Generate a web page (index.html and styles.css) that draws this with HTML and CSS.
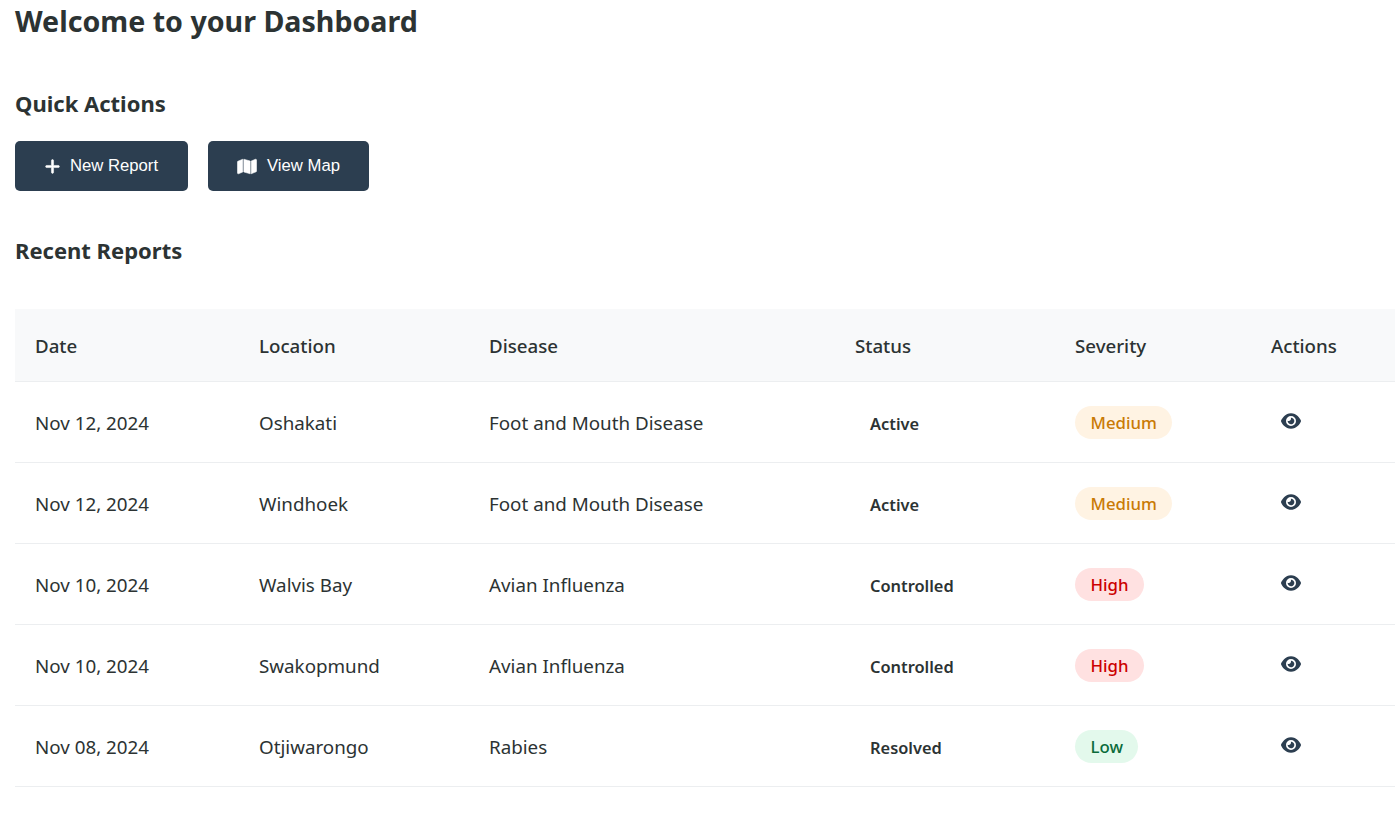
FILE: index.html
```html
<!DOCTYPE html>
<html lang="en">
<head>
<meta charset="utf-8">
<title>Dashboard</title>
<link rel="stylesheet" href="styles.css">
</head>
<body>
<svg class="defs" aria-hidden="true">
  <symbol id="eye" viewBox="0 0 576 512"><path fill="currentColor" d="M288 32c-80.800 0-145.500 36.800-192.600 80.600C48.600 156 17.300 208 2.500 243.700c-3.300 7.900-3.300 16.700 0 24.600C17.300 304 48.600 356 95.400 399.400C142.500 443.200 207.200 480 288 480s145.500-36.800 192.600-80.600c46.800-43.500 78.100-95.400 93-131.100c3.300-7.900 3.300-16.700 0-24.600c-14.900-35.700-46.200-87.700-93-131.100C433.500 68.800 368.800 32 288 32zM144 256a144 144 0 1 1 288 0 144 144 0 1 1-288 0zm144-64c0 35.300-28.700 64-64 64c-7.100 0-13.900-1.200-20.300-3.300c-5.500-1.800-11.900 1.600-11.700 7.400c.3 6.900 1.300 13.800 3.200 20.700c13.700 51.200 66.400 81.600 117.600 67.900s81.600-66.400 67.900-117.600c-11.100-41.500-47.800-69.400-88.600-71.100c-5.800-.2-9.200 6.100-7.400 11.700c2.100 6.400 3.300 13.200 3.300 20.300z"/></symbol>
</svg>
<main class="page">
  <h1 class="title">Welcome to your Dashboard</h1>
  <h2 class="section-title quick-title">Quick Actions</h2>
  <div class="actions">
    <button class="btn btn-new" type="button">
      <svg class="btn-icon plus" viewBox="0 0 448 512" aria-hidden="true"><path fill="currentColor" d="M256 80c0-17.700-14.300-32-32-32s-32 14.300-32 32v144H48c-17.700 0-32 14.300-32 32s14.300 32 32 32h144v144c0 17.700 14.300 32 32 32s32-14.300 32-32V288h144c17.700 0 32-14.300 32-32s-14.300-32-32-32H256V80z"/></svg>
      New Report
    </button>
    <button class="btn btn-map" type="button">
      <svg class="btn-icon map" viewBox="0 0 576 512" aria-hidden="true"><path fill="currentColor" d="M384 476.100L192 421.200V35.900L384 90.800V476.100zm32-1.200V88.400L543.100 37.500c15.800-6.300 32.900 5.300 32.900 22.300V394.600c0 9.800-6 18.600-15.100 22.300L416 474.800zM15.100 95.100L160 37.200V423.600L32.900 474.500C17.100 480.800 0 469.200 0 452.200V117.400c0-9.800 6-18.600 15.100-22.300z"/></svg>
      View Map
    </button>
  </div>
  <h2 class="section-title recent-title">Recent Reports</h2>
  <table class="reports">
    <colgroup>
      <col class="c-date"><col class="c-loc"><col class="c-dis"><col class="c-status"><col class="c-sev"><col>
    </colgroup>
    <thead>
      <tr><th>Date</th><th>Location</th><th>Disease</th><th>Status</th><th>Severity</th><th>Actions</th></tr>
    </thead>
    <tbody>
      <tr><td>Nov 12, 2024</td><td>Oshakati</td><td>Foot and Mouth Disease</td><td><span class="status">Active</span></td><td><span class="pill medium">Medium</span></td><td><svg class="eye" aria-hidden="true"><use href="#eye"/></svg></td></tr>
      <tr><td>Nov 12, 2024</td><td>Windhoek</td><td>Foot and Mouth Disease</td><td><span class="status">Active</span></td><td><span class="pill medium">Medium</span></td><td><svg class="eye" aria-hidden="true"><use href="#eye"/></svg></td></tr>
      <tr><td>Nov 10, 2024</td><td>Walvis Bay</td><td>Avian Influenza</td><td><span class="status">Controlled</span></td><td><span class="pill high">High</span></td><td><svg class="eye" aria-hidden="true"><use href="#eye"/></svg></td></tr>
      <tr><td>Nov 10, 2024</td><td>Swakopmund</td><td>Avian Influenza</td><td><span class="status">Controlled</span></td><td><span class="pill high">High</span></td><td><svg class="eye" aria-hidden="true"><use href="#eye"/></svg></td></tr>
      <tr><td>Nov 08, 2024</td><td>Otjiwarongo</td><td>Rabies</td><td><span class="status">Resolved</span></td><td><span class="pill low">Low</span></td><td><svg class="eye" aria-hidden="true"><use href="#eye"/></svg></td></tr>
    </tbody>
  </table>
</main>
</body>
</html>
```
FILE: styles.css
```css
* { box-sizing: border-box; }
html, body { margin: 0; padding: 0; background: #fff; }
body {
  font-family: "Noto Sans", "Open Sans", sans-serif;
  color: #2c3333;
  overflow-x: hidden;
}
.defs { display: none; }
.page { padding-left: 15px; }
.title {
  margin: 0;
  padding-top: 1px;
  font-size: 28.600px;
  line-height: 40px;
  font-weight: 700;
}
.section-title {
  margin: 0;
  font-size: 22px;
  line-height: 30px;
  font-weight: 700;
}
.quick-title { margin-top: 47px; }
.actions { display: flex; gap: 20px; margin-top: 23px; }
.btn {
  display: flex;
  align-items: center;
  justify-content: center;
  gap: 10px;
  height: 50px;
  padding: 0;
  border: 0;
  border-radius: 5px;
  background: #2c3e50;
  color: #fff;
  font-family: "Liberation Sans", Arial, sans-serif;
  font-size: 16.700px;
}
.btn-new { width: 173px; }
.btn-map { width: 161px; }
.btn-icon { height: 17px; stroke: currentColor; stroke-width: 16px; }
.btn-icon.plus { width: 15px; }
.btn-icon.map { width: 20px; }
.recent-title { margin-top: 44px; }
.reports {
  width: 1380px;
  margin-top: 44px;
  border-collapse: collapse;
  table-layout: fixed;
  font-size: 18.800px;
}
.c-date { width: 224px; }
.c-loc { width: 230px; }
.c-dis { width: 366px; }
.c-status { width: 220px; }
.c-sev { width: 196px; }
.reports th {
  height: 72px;
  padding: 2px 20px 0;
  background: #f8f9fa;
  border-bottom: 1px solid #eceef0;
  text-align: left;
  font-size: 18.700px;
  font-weight: 500;
}
.reports td {
  height: 81px;
  padding: 2px 20px 0;
  border-bottom: 1px solid #eceef0;
  font-weight: 400;
  vertical-align: middle;
}
.status {
  display: inline-block;
  padding: 0 15px;
  font-size: 16.400px;
  font-weight: 600;
}
.pill {
  display: inline-block;
  height: 33px;
  padding: 0 15.500px;
  border-radius: 17px;
  font-size: 16.800px;
  line-height: 33px;
  font-weight: 500;
}
.medium { background: #fff3e3; color: #c97a05; }
.high { background: #ffe1e1; color: #cc0000; }
.low { background: #e3f9ec; color: #0a6b3a; }
.eye {
  display: block;
  width: 20px;
  height: 18px;
  margin: -4px 0 0 10px;
  color: #2c3e50;
}
```
